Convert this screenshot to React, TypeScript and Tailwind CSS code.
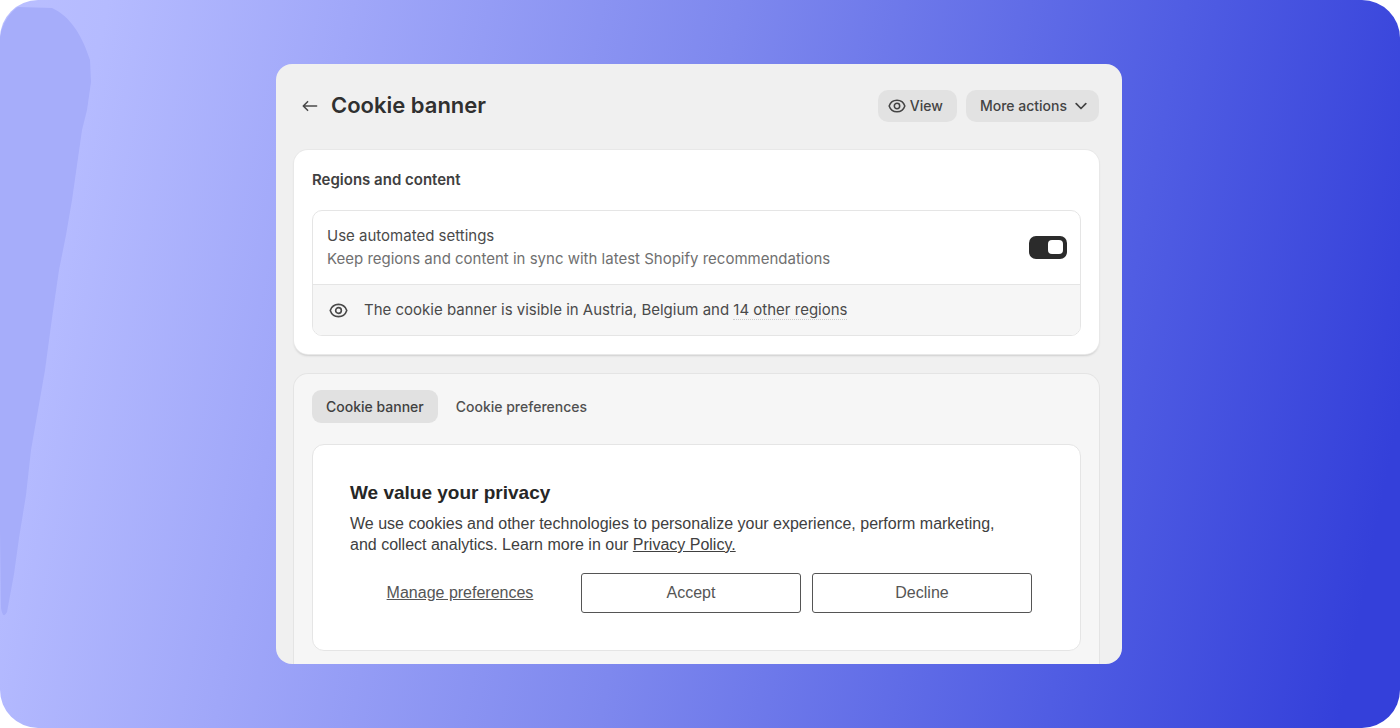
import { useState } from "react";

function EyeIcon({ className }: { className?: string }) {
  return (
    <svg viewBox="0 0 20 20" fill="none" stroke="currentColor" strokeWidth="1.7" className={className} aria-hidden="true">
      <path d="M1.3 10C2.6 6.1 6 3.6 10 3.6S17.4 6.1 18.7 10C17.4 13.9 14 16.4 10 16.4S2.6 13.9 1.3 10Z" strokeLinejoin="round" />
      <circle cx="10" cy="10" r="3" />
    </svg>
  );
}

function ChevronIcon() {
  return (
    <svg viewBox="0 0 12 12" fill="none" stroke="currentColor" strokeWidth="1.7" strokeLinecap="round" strokeLinejoin="round" className="h-3 w-3" aria-hidden="true">
      <path d="M1.2 3.7 6 8.5l4.8-4.8" />
    </svg>
  );
}

function ArrowLeftIcon() {
  return (
    <svg viewBox="0 0 16 16" fill="none" stroke="currentColor" strokeWidth="1.6" strokeLinecap="round" strokeLinejoin="round" className="h-4 w-4" aria-hidden="true">
      <path d="M14.6 8H1.5M5.600 3.700 1.300 8l4.300 4.300" />
    </svg>
  );
}

function Header() {
  return (
    <header className="flex items-center justify-between">
      <div className="flex items-center gap-[13px] pl-2">
        <a href="#back" aria-label="Back" className="text-[#4a4a4a]">
          <ArrowLeftIcon />
        </a>
        <h1 className="pb-0.5 text-[22px] font-semibold leading-[30px] text-[#303030]">Cookie banner</h1>
      </div>
      <div className="flex gap-[9px]">
        <button className="flex h-8 items-center gap-1 rounded-[10px] bg-[#e2e2e2] pl-2.5 pr-3.5 text-sm font-medium text-[#444444]">
          <EyeIcon className="h-[18px] w-[18px]" />
          View
        </button>
        <button className="flex h-8 items-center gap-2 rounded-[10px] bg-[#e2e2e2] pl-3.5 pr-3 text-sm font-medium text-[#444444]">
          More actions
          <ChevronIcon />
        </button>
      </div>
    </header>
  );
}

function RegionsCard() {
  const [automated, setAutomated] = useState(true);

  return (
    <section className="mt-7 rounded-[14px] bg-white p-[18px] shadow-[0_0_0_1px_#e8e8e8,0_2px_2px_#cfcfcf]">
      <h2 className="text-[15px] font-semibold leading-6 text-[#404040]">Regions and content</h2>
      <div className="mt-[18px] overflow-hidden rounded-[10px] border border-[#e5e5e5]">
        <div className="flex items-center justify-between pb-3.5 pl-3.5 pr-[13px] pt-[13px]">
          <label htmlFor="automated" className="text-[15px] leading-[23px] text-[#4a4a4a]">
            Use automated settings
            <span className="block text-[#707070]">Keep regions and content in sync with latest Shopify recommendations</span>
          </label>
          <input
            id="automated"
            type="checkbox"
            role="switch"
            checked={automated}
            onChange={(e) => setAutomated(e.target.checked)}
            className="flex h-[23px] w-[38px] shrink-0 appearance-none items-center rounded-[7px] bg-[#b5b5b5] px-1 before:h-[14px] before:w-[15px] before:rounded-[4px] before:bg-white checked:justify-end checked:bg-[#2b2b2b]"
          />
        </div>
        <div className="flex items-center gap-4 border-t border-[#e5e5e5] bg-[#f6f6f6] py-3.5 pl-4 text-[15px] leading-[22px] text-[#4a4a4a]">
          <EyeIcon className="h-[19px] w-[19px]" />
          <p>
            The cookie banner is visible in Austria, Belgium and{" "}
            <a href="#regions" className="border-b border-dotted border-[#cccccc]">14 other regions</a>
          </p>
        </div>
      </div>
    </section>
  );
}

function PreviewCard() {
  return (
    <section className="mt-5 rounded-t-[14px] bg-[#f6f6f6] px-[18px] pb-[13px] pt-4 shadow-[0_0_0_1px_#e4e4e4]">
      <nav className="flex gap-1 text-sm font-medium text-[#505050]">
        <button className="h-[33px] rounded-[9px] bg-[#e1e1e1] px-3.5 text-[#404040]">Cookie banner</button>
        <button className="h-[33px] rounded-[9px] px-3.5">Cookie preferences</button>
      </nav>
      <div className="mt-[21px] rounded-xl border border-[#e5e5e5] bg-white pb-[37px] pl-[37px] pr-12 pt-9 font-['Liberation_Sans',Arial,sans-serif]">
        <h2 className="text-[19px] font-bold leading-6 text-[#262626]">We value your privacy</h2>
        <p className="mt-2 max-w-[660px] text-base leading-[21px] text-[#404040]">
          We use cookies and other technologies to personalize your experience, perform marketing, and collect analytics.
          Learn more in our{" "}
          <a href="#privacy" className="underline">Privacy Policy.</a>
        </p>
        <div className="mt-[18px] grid grid-cols-3 gap-[11px] text-base text-[#555555]">
          <button className="h-10 underline">Manage preferences</button>
          <button className="h-10 rounded-[3px] border border-[#555555]">Accept</button>
          <button className="h-10 rounded-[3px] border border-[#555555]">Decline</button>
        </div>
      </div>
    </section>
  );
}

export default function App() {
  return (
    <div className="bg-white">
      <main className="relative flex min-h-screen items-center justify-center overflow-hidden rounded-[38px] bg-[linear-gradient(101deg,#babfff_0%,#b5bbff_7%,#a0a7f9_23%,#7e88ee_48%,#505de3_77%,#3440da_96%)] pr-0.5 font-[Inter,sans-serif]">
        <svg viewBox="0 0 92 728" className="absolute left-0 top-0 h-full w-[92px]" preserveAspectRatio="none" aria-hidden="true">
          <path d="M0 36C3 22 10 12 18 7L52 8C70 16 82 35 90 60L91 82L87 110L82 130L77 165L72 200L66 235L59 270L52 318L45 370L38 410L31 450L26 495L19 538L14 574L7 612Q3 620 1 608L0 530Z" fill="#a6adfa" />
        </svg>
        <div className="relative w-full max-w-[846px] overflow-hidden rounded-2xl bg-[#f0f0f0] pl-[18px] pr-[23px] pt-[26px]">
          <Header />
          <RegionsCard />
          <PreviewCard />
        </div>
      </main>
    </div>
  );
}
